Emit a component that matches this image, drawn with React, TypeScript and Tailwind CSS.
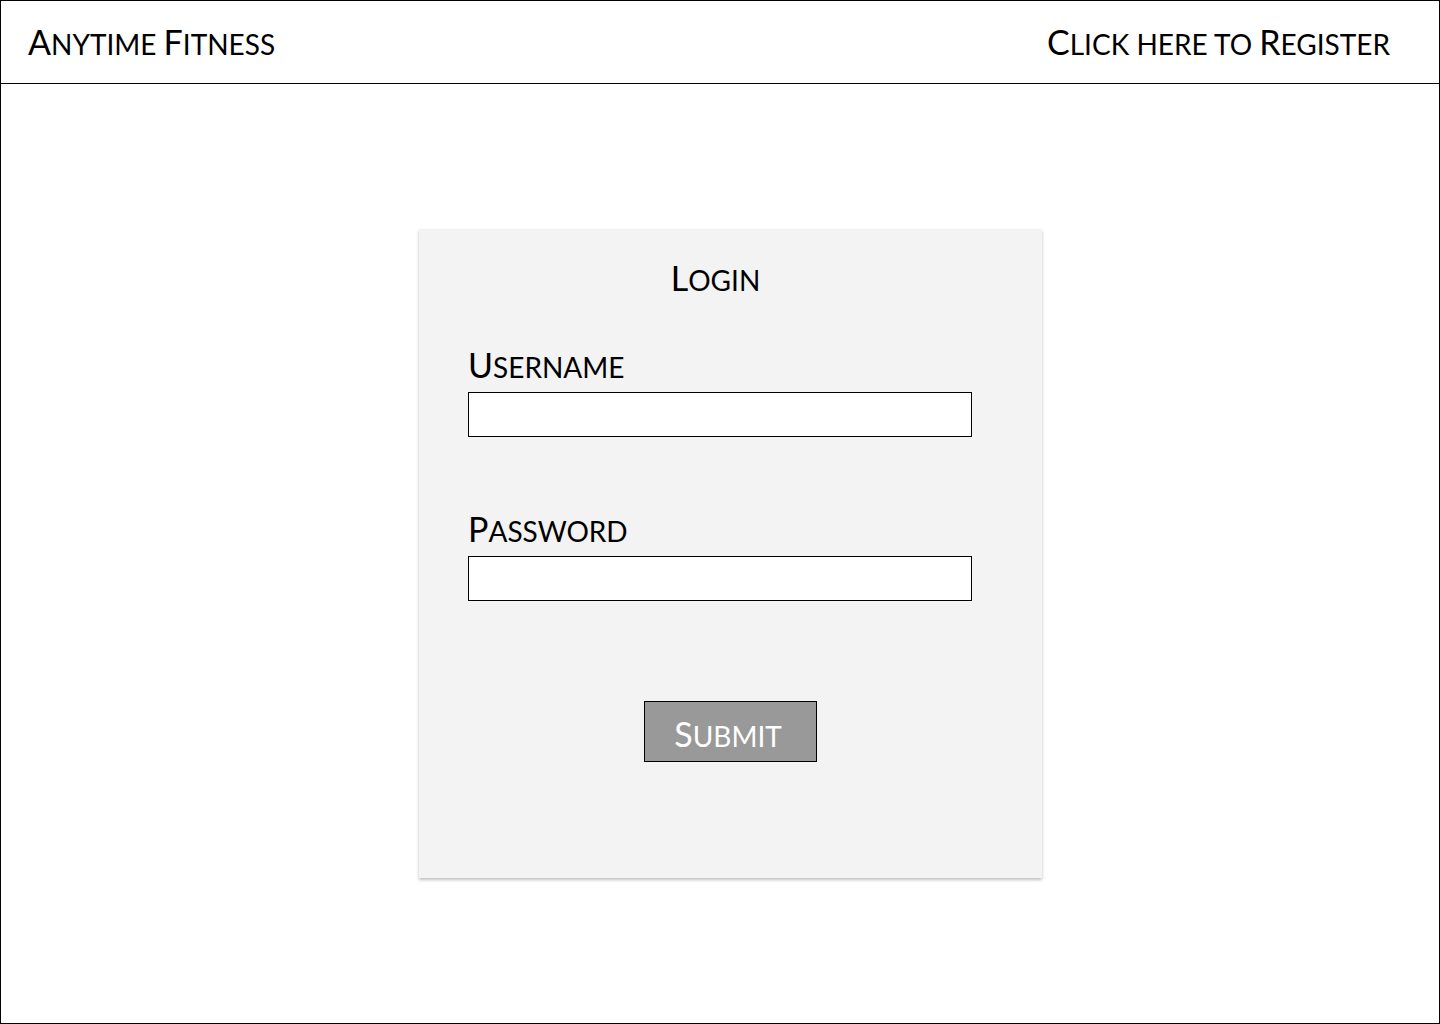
import React from "react";

const font = { fontFamily: "Lato, 'Open Sans', sans-serif" };

// small caps built by hand: first letter of each word at full size, rest as smaller capitals
const SC = ({ text }: { text: string }) => {
  const words = text.split(" ");
  return (
    <span className="whitespace-nowrap">
      {words.map((w, i) => {
        const first = w[0];
        const big = first === first.toUpperCase();
        return (
          <React.Fragment key={i}>
            {i > 0 && <span className="text-[28px] leading-none"> </span>}
            {big ? (
              <span className="text-[34px] leading-none">{first}</span>
            ) : (
              <span className="text-[28px] leading-none uppercase">{first}</span>
            )}
            <span className="text-[28px] leading-none uppercase">{w.slice(1)}</span>
          </React.Fragment>
        );
      })}
    </span>
  );
};

const Field = ({ label, top }: { label: string; top: string }) => {
  return (
    <div className={`${top} ml-[49px]`}>
      <p className="text-[34px] leading-[40px] text-black">
        <SC text={label} />
      </p>
      <div className="mt-[7px] w-[504px] h-[45px] bg-white border border-black" />
    </div>
  );
};

const App = () => {
  return (
    <div style={font} className="w-[1440px] h-[1024px] border border-black bg-white">
      <div className="h-[83px] border-b border-black flex items-center justify-between pl-[27px] pr-[49px] text-black">
        <p className="text-[34px] leading-[40px]">
          <SC text="Anytime Fitness" />
        </p>
        <p className="text-[34px] leading-[40px]">
          <SC text="Click here to Register" />
        </p>
      </div>
      <div className="pt-[145px] pl-[418px]">
        <div className="w-[623px] h-[649px] bg-[#f3f3f3] shadow-[0_2px_3px_rgba(0,0,0,0.25)] pt-[29px]">
          <p className="text-[34px] leading-[40px] text-black text-center pr-[30px]">
            <SC text="Login" />
          </p>
          <Field label="Username" top="mt-[47px]" />
          <Field label="Password" top="mt-[72px]" />
          <div className="flex justify-center mt-[100px]">
            <button className="w-[173px] h-[61px] bg-[#999999] border border-black text-white text-[34px] leading-[40px] pt-[4px] pr-[5px]">
              <SC text="Submit" />
            </button>
          </div>
        </div>
      </div>
    </div>
  );
};

export default App;
